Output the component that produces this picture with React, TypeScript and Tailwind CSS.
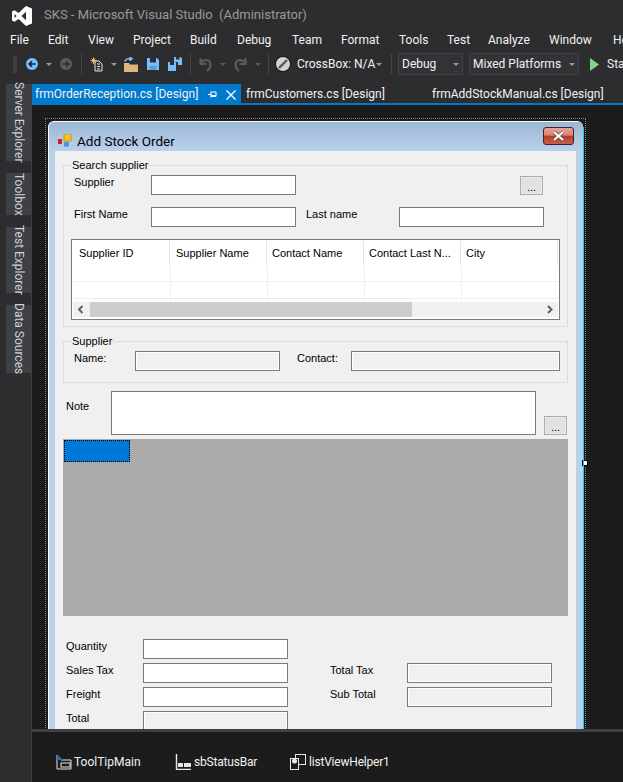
import React from "react";

const ui = "font-['Roboto',sans-serif]";
const win = "font-['Liberation_Sans',Arial,sans-serif] text-[11px] leading-[14px] text-black";

function Tri({ ml, color = "#999999" }: { ml: string; color?: string }) {
  return (
    <svg width="6" height="3" viewBox="0 0 6 3" className={`shrink-0 ${ml}`}>
      <polygon points="0,0 6,0 3,3" fill={color} />
    </svg>
  );
}

function Sep({ ml }: { ml: string }) {
  return <div className={`w-px h-[20px] bg-[#46464a] shrink-0 ${ml}`} />;
}

function Logo() {
  return (
    <svg width="20" height="20" viewBox="0 0 20 20" className="ml-[12px] mt-[1px] shrink-0">
      <path
        fillRule="evenodd"
        fill="#ffffff"
        d="M14 0 L20 2.5 V17.5 L14 20 L6.5 13 L2.5 15.8 L0 14.5 V5.5 L2.5 4.2 L6.5 7 Z M14 5.8 L9.5 10 L14 14.2 Z M2.5 8 V12 L4.5 10 Z"
      />
    </svg>
  );
}

function ToolIcons() {
  return (
    <>
      <div className="ml-[13px] w-[4px] h-[17px] bg-[radial-gradient(circle,#555_0.6px,transparent_0.8px)] bg-[length:2px_2px]" />
      <svg width="12" height="12" viewBox="0 0 12 12" className="ml-[9px]">
        <circle cx="6" cy="6" r="6" fill="#75beff" />
        <path d="M9.5 6H3.5M6 3.2L3.2 6L6 8.8" stroke="#1e1e1e" strokeWidth="1.6" fill="none" />
      </svg>
      <Tri ml="ml-[8px]" />
      <svg width="12" height="12" viewBox="0 0 12 12" className="ml-[8px]">
        <circle cx="6" cy="6" r="6" fill="#5a5a5c" />
        <path d="M2.5 6H8.5M6 3.2L8.8 6L6 8.8" stroke="#2d2d30" strokeWidth="1.6" fill="none" />
      </svg>
      <Sep ml="ml-[9px]" />
      <svg width="13" height="15" viewBox="0 0 13 15" className="ml-[8px]">
        <path d="M5 4H9L12 7V14H5Z M7 7H10 M7 9.5H10 M7 12H10" fill="#2d2d30" stroke="#e8e8e8" strokeWidth="1" />
        <path d="M3.5 0.5V7M0.5 3.5H7M1.5 1.5L5.5 5.5M5.5 1.5L1.5 5.5" stroke="#e8b465" strokeWidth="1" />
      </svg>
      <Tri ml="ml-[8px]" />
      <svg width="14" height="15" viewBox="0 0 14 15" className="ml-[7px]">
        <path d="M0 6H5L6 7.5H14V15H0Z" fill="#dcb67a" />
        <path d="M1 4.5C1.5 2 4 1.5 7 1.5M5.5 0L8 1.7L5.5 3.5" stroke="#75beff" strokeWidth="1.6" fill="none" />
      </svg>
      <svg width="12" height="12" viewBox="0 0 12 12" className="ml-[9px]">
        <path d="M0 0H10L12 2V12H0Z" fill="#75beff" />
        <rect x="3" y="0" width="6" height="4.5" fill="#2d2d30" />
        <rect x="2.5" y="7.5" width="7" height="4.5" fill="#5a9bd8" />
      </svg>
      <svg width="14" height="14" viewBox="0 0 14 14" className="ml-[9px]">
        <path d="M6 0H12.5L14 1.5V8H10V5H6Z" fill="#75beff" />
        <rect x="8" y="0" width="3.5" height="2.5" fill="#2d2d30" />
        <path d="M0 5H7L8 6V14H0Z" fill="#75beff" />
        <rect x="2" y="5" width="4" height="3" fill="#2d2d30" />
      </svg>
      <Sep ml="ml-[8px]" />
      <svg width="14" height="15" viewBox="0 0 14 15" className="ml-[7px]">
        <path d="M2.5 1V7H8.5M2.5 6C5 3 7.5 2.5 10 3.5C13.5 5 13.5 10.5 9 14" stroke="#5a5a5c" strokeWidth="2.2" fill="none" />
      </svg>
      <Tri ml="ml-[8px]" color="#5a5a5c" />
      <svg width="14" height="15" viewBox="0 0 14 15" className="ml-[8px]">
        <path d="M11.5 1V7H5.5M11.5 6C9 3 6.5 2.5 4 3.5C0.5 5 0.5 10.5 5 14" stroke="#5a5a5c" strokeWidth="2.2" fill="none" />
      </svg>
      <Tri ml="ml-[7px]" color="#5a5a5c" />
      <Sep ml="ml-[7px]" />
      <svg width="16" height="16" viewBox="0 0 16 16" className="ml-[6px]">
        <circle cx="8" cy="8" r="7.5" fill="#d2d2d2" />
        <circle cx="8" cy="8" r="7.5" fill="none" stroke="#111" strokeWidth="1" />
        <path d="M4 12L12 4" stroke="#555" strokeWidth="2.4" />
      </svg>
    </>
  );
}

function Combo({ label, w, tw, tri }: { label: string; w: string; tw: string; tri: string }) {
  return (
    <div className={`ml-[6px] ${w} shrink-0 h-[22px] bg-[#333337] border border-[#434346] flex items-center pl-[3px] text-[12px] text-[#f1f1f1] whitespace-nowrap`}>
      <span className={tw}>{label}</span>
      <Tri ml={tri} />
    </div>
  );
}

function Sidebar() {
  const bars: [string, string][] = [
    ["Server Explorer", "h-[77px] mb-[12px]"],
    ["Toolbox", "h-[42px] mb-[12px]"],
    ["Test Explorer", "h-[66px] mb-[12px]"],
    ["Data Sources", "h-[68px]"],
  ];
  return (
    <div className="w-[32px] shrink-0 border-r border-[#3f3f46] pl-[6px]">
      {bars.map(([t, c]) => (
        <div key={t} className={`w-[25px] bg-[#3f3f46] text-[12px] leading-[20px] text-[#d0d0d0] [writing-mode:vertical-rl] flex items-center justify-center whitespace-nowrap ${c}`}>
          {t}
        </div>
      ))}
    </div>
  );
}

function Tabs() {
  return (
    <div className="h-[21px] shrink-0 border-b-2 border-[#007acc] flex text-[12px] leading-[17px] text-[#f1f1f1] whitespace-nowrap">
      <div className="w-[209px] shrink-0 bg-[#007acc] pl-[3px] pt-[2px] flex items-center">
        <span className="w-[172px] shrink-0">frmOrderReception.cs [Design]</span>
        <svg width="9" height="9" viewBox="0 0 9 9" className="ml-px shrink-0">
          <path d="M0 4.5H3M3 1.5V7.5M3 2H8V6.5H3M3 5.5H8" stroke="#fff" strokeWidth="1" fill="none" />
        </svg>
        <svg width="10" height="10" viewBox="0 0 10 10" className="ml-[9px] shrink-0">
          <path d="M0.5 0.5L9.5 9.5M9.5 0.5L0.5 9.5" stroke="#fff" strokeWidth="1.4" />
        </svg>
      </div>
      <div className="ml-[5px] pt-[2px] w-[186px] shrink-0">frmCustomers.cs [Design]</div>
      <div className="pt-[2px] shrink-0">frmAddStockManual.cs [Design]</div>
    </div>
  );
}

function Box({ w = "w-[145px]", h = "h-[20px]", off = false }: { w?: string; h?: string; off?: boolean }) {
  return (
    <div className={`${w} ${h} shrink-0 border border-[#7a7a7a] ${off ? "bg-[#f0f0f0] shadow-[inset_0_0_0_1px_#ffffff]" : "bg-white"}`} />
  );
}

function Dots({ className = "" }: { className?: string }) {
  return (
    <div className={`w-[23px] h-[19px] border-[1px] border-[#adadad] bg-[#e1e1e1] shadow-[inset_0_0_0_1px_#e9e9e9] flex items-end justify-center leading-[13px] text-[11px] ${className}`}>
      ...
    </div>
  );
}

function Legend({ text }: { text: string }) {
  return (
    <div className="absolute left-[7px] -top-[8px] bg-[#f0f0f0] px-px leading-[14px] whitespace-nowrap">{text}</div>
  );
}

function Lv() {
  const cols: [string, string, string][] = [
    ["Supplier ID", "w-[98px]", "pl-[7px]"],
    ["Supplier Name", "w-[97px]", "pl-[6px]"],
    ["Contact Name", "w-[97px]", "pl-[5px]"],
    ["Contact Last N...", "w-[97px]", "pl-[5px]"],
    ["City", "w-[97px]", "pl-[5px]"],
  ];
  return (
    <div className="ml-[7px] mt-[12px] w-[489px] h-[81px] border border-[#7a7a7a] bg-white">
      <div className="flex h-[25px] pt-px">
        {cols.map(([c, w, p]) => (
          <div key={c} className={`${w} ${p} h-[24px] border-r border-[#e5e5e5] pt-[5px] whitespace-nowrap`}>{c}</div>
        ))}
      </div>
      <div className="h-[37px] flex ml-[2px] mr-[1px] overflow-hidden">
        {cols.map(([c]) => (
          <div key={c} className="w-[97px] shrink-0 h-[36px] border-r border-[#f0f0f0]">
            <div className="h-[17px] border-b border-[#f0f0f0]" />
            <div className="h-[17px] border-b border-[#f0f0f0]" />
          </div>
        ))}
      </div>
      <div className="mx-[1px] h-[15px] bg-[#f0f0f0] flex items-center">
        <svg width="17" height="15" viewBox="0 0 17 15">
          <path d="M9.5 4L6 7.5L9.5 11" stroke="#606060" strokeWidth="2" fill="none" />
        </svg>
        <div className="w-[322px] h-[15px] bg-[#cdcdcd]" />
        <svg width="17" height="15" viewBox="0 0 17 15" className="ml-auto">
          <path d="M7 4L10.5 7.5L7 11" stroke="#606060" strokeWidth="2" fill="none" />
        </svg>
      </div>
    </div>
  );
}

function WinForm() {
  return (
    <div className="bg-[#b9d1ea] rounded-t-[6px] border-l border-t border-white border-r-0 pr-[7px] h-[620px] overflow-hidden w-[535px]">
      <div className="-mr-[7px] h-[29px] bg-gradient-to-b from-[#9db8d4] to-[#b9d1ec] flex items-center pl-[9px]">
        <svg width="14" height="13" viewBox="0 0 14 13" className="mt-[8px] shrink-0">
          <rect x="0.5" y="1" width="13" height="11.5" fill="#c8c8c8" opacity="0.5" />
          <rect x="0" y="5" width="4" height="5" fill="#c62828" />
          <rect x="6" y="0" width="7" height="7" fill="#f5c518" stroke="#b07a10" strokeWidth="0.6" />
          <rect x="6" y="8" width="5" height="4.5" fill="#4f8fe6" />
        </svg>
        <span className="ml-[5px] mt-[9px] text-[13.5px] leading-[20px] text-black whitespace-nowrap">Add Stock Order</span>
        <div className="ml-auto mr-[9px] mt-[-1px] w-[31px] h-[18px] rounded-[3px] border border-[#4a1c2a] bg-[linear-gradient(#e3a497_0%,#d98475_45%,#b83d22_50%,#c5604c_100%)] flex items-center justify-center">
          <svg width="13" height="10" viewBox="0 0 13 10">
            <path d="M2 1L11 9M11 1L2 9" stroke="#4a4a4a" strokeWidth="3.4" />
            <path d="M2 1L11 9M11 1L2 9" stroke="#ffffff" strokeWidth="2.2" />
          </svg>
        </div>
      </div>
      <div className={`ml-[6px] h-[600px] bg-[#f0f0f0] pl-[8px] ${win}`}>
        <div className="h-[14px]" />
        <div className="relative w-[505px] h-[162px] border border-[#dcdcdc]">
          <Legend text="Search supplier" />
          <div className="flex items-start pl-[10px] pt-[9px]">
            <div className="w-[77px]">Supplier</div>
            <Box />
            <Dots className="ml-[224px] mt-px" />
          </div>
          <div className="flex items-start pl-[10px] mt-[12px]">
            <div className="w-[77px]">First Name</div>
            <Box />
            <div className="ml-[10px] w-[93px]">Last name</div>
            <Box />
          </div>
          <Lv />
        </div>
        <div className="relative mt-[14px] w-[505px] h-[42px] border border-[#dcdcdc]">
          <Legend text="Supplier" />
          <div className="flex items-start pl-[10px] pt-[9px]">
            <div className="w-[61px]">Name:</div>
            <Box off />
            <div className="ml-[17px] w-[54px]">Contact:</div>
            <Box w="w-[209px]" off />
          </div>
        </div>
        <div className="flex items-start mt-[8px] pl-[3px]">
          <div className="w-[45px] pt-[8px]">Note</div>
          <Box w="w-[425px]" h="h-[44px]" />
          <Dots className="ml-[8px] mt-[25px]" />
        </div>
        <div className="mt-[4px] w-[505px] h-[177px] bg-[#ababab] p-px">
          <div className="w-[66px] h-[22px] bg-[#0078d7] border border-dotted border-black" />
        </div>
        <div className="mt-[23px] pl-[3px] flex flex-col gap-[4px]">
          <div className="flex items-start">
            <div className="w-[77px]">Quantity</div>
            <Box />
          </div>
          <div className="flex items-start">
            <div className="w-[77px]">Sales Tax</div>
            <Box />
            <div className="ml-[42px] w-[77px]">Total Tax</div>
            <Box off />
          </div>
          <div className="flex items-start">
            <div className="w-[77px]">Freight</div>
            <Box />
            <div className="ml-[42px] w-[77px]">Sub Total</div>
            <Box off />
          </div>
          <div className="flex items-start">
            <div className="w-[77px]">Total</div>
            <Box off />
          </div>
        </div>
      </div>
    </div>
  );
}

function Tray() {
  return (
    <div className="h-[50px] bg-[#1c1c1c] flex items-center pl-[24px] pt-[9px] text-[12px] text-[#f1f1f1] whitespace-nowrap">
      <div className="w-[119px] flex items-center">
        <svg width="16" height="16" viewBox="0 0 16 16">
          <path d="M1 1V15H15V6H5" stroke="#e8e8e8" strokeWidth="1" fill="none" />
          <rect x="5" y="9" width="9" height="4" fill="none" stroke="#e8e8e8" />
          <path d="M1 0L7 6H1Z" fill="#1f6fb8" />
        </svg>
        <span className="ml-[2px]">ToolTipMain</span>
      </div>
      <div className="w-[115px] flex items-center">
        <svg width="16" height="16" viewBox="0 0 16 16">
          <path d="M1.5 0V15.5H16" stroke="#e8e8e8" strokeWidth="1.4" fill="none" />
          <rect x="3" y="9" width="5" height="4" fill="#e8e8e8" />
          <rect x="9" y="9" width="7" height="4" fill="#e8e8e8" />
        </svg>
        <span className="ml-[3px] tracking-[-0.2px]">sbStatusBar</span>
      </div>
      <div className="flex items-center">
        <svg width="16" height="16" viewBox="0 0 16 16">
          <rect x="5.5" y="0.5" width="10" height="10" fill="#1c1c1c" stroke="#e8e8e8" />
          <rect x="0.5" y="4.5" width="8" height="11" fill="#1c1c1c" stroke="#e8e8e8" />
          <circle cx="4.5" cy="7" r="2.5" fill="#e8e8e8" />
        </svg>
        <span className="ml-[3px] tracking-[-0.2px]">listViewHelper1</span>
      </div>
    </div>
  );
}

export default function App() {
  return (
    <div className={`w-[623px] h-[782px] overflow-hidden bg-[#2d2d30] flex flex-col ${ui}`}>
      <div className="h-[30px] shrink-0 flex items-center">
        <Logo />
        <span className="ml-[12px] text-[13px] text-[#999999] whitespace-nowrap">SKS - Microsoft Visual Studio&nbsp; (Administrator)</span>
      </div>
      <div className="h-[20px] shrink-0 flex items-center pl-[10px] text-[12px] text-[#f1f1f1] whitespace-nowrap">
        {[
          ["File", "w-[38px]"],
          ["Edit", "w-[40px]"],
          ["View", "w-[45px]"],
          ["Project", "w-[57px]"],
          ["Build", "w-[47px]"],
          ["Debug", "w-[55px]"],
          ["Team", "w-[49px]"],
          ["Format", "w-[58px]"],
          ["Tools", "w-[48px]"],
          ["Test", "w-[41px]"],
          ["Analyze", "w-[61px]"],
          ["Window", "w-[64px]"],
          ["Help", "w-[40px]"],
        ].map(([t, w]) => (
          <div key={t} className={`${w} shrink-0`}>{t}</div>
        ))}
      </div>
      <div className="h-[28px] mb-[6px] shrink-0 flex items-center text-[12px] text-[#f1f1f1] whitespace-nowrap [&>*]:shrink-0">
        <ToolIcons />
        <span className="ml-[6px] w-[76px]">CrossBox: N/A</span>
        <Tri ml="ml-[3px]" />
        <Sep ml="ml-[9px]" />
        <Combo label="Debug" w="w-[65px]" tw="w-[51px]" tri="ml-[0px]" />
        <Combo label="Mixed Platforms" w="w-[110px]" tw="w-[96px]" tri="ml-[0px]" />
        <svg width="9" height="13" viewBox="0 0 9 13" className="ml-[11px]">
          <polygon points="0,0 9,6.5 0,13" fill="#89d185" />
        </svg>
        <span className="ml-[8px]">Start</span>
      </div>
      <div className="flex flex-1 min-h-0">
        <Sidebar />
        <div className="flex-1 flex flex-col min-w-0">
          <Tabs />
          <div className="h-[624px] shrink-0 bg-[#1c1c1c] overflow-hidden pl-[13px] pt-[13px]">
            <div className="relative w-[541px] h-[640px] border border-dotted border-[#808080] pl-[2px] pt-[2px]">
              <WinForm />
              <div className="absolute left-[536px] top-[341px] w-[6px] h-[6px] bg-white border border-black" />
              <div className="absolute left-[537px] top-[8px] bottom-0 w-px bg-[#2bc4e8]" />
            </div>
          </div>
          <div className="h-[3px] shrink-0 bg-[#3f3f46]" />
          <Tray />
        </div>
      </div>
    </div>
  );
}
